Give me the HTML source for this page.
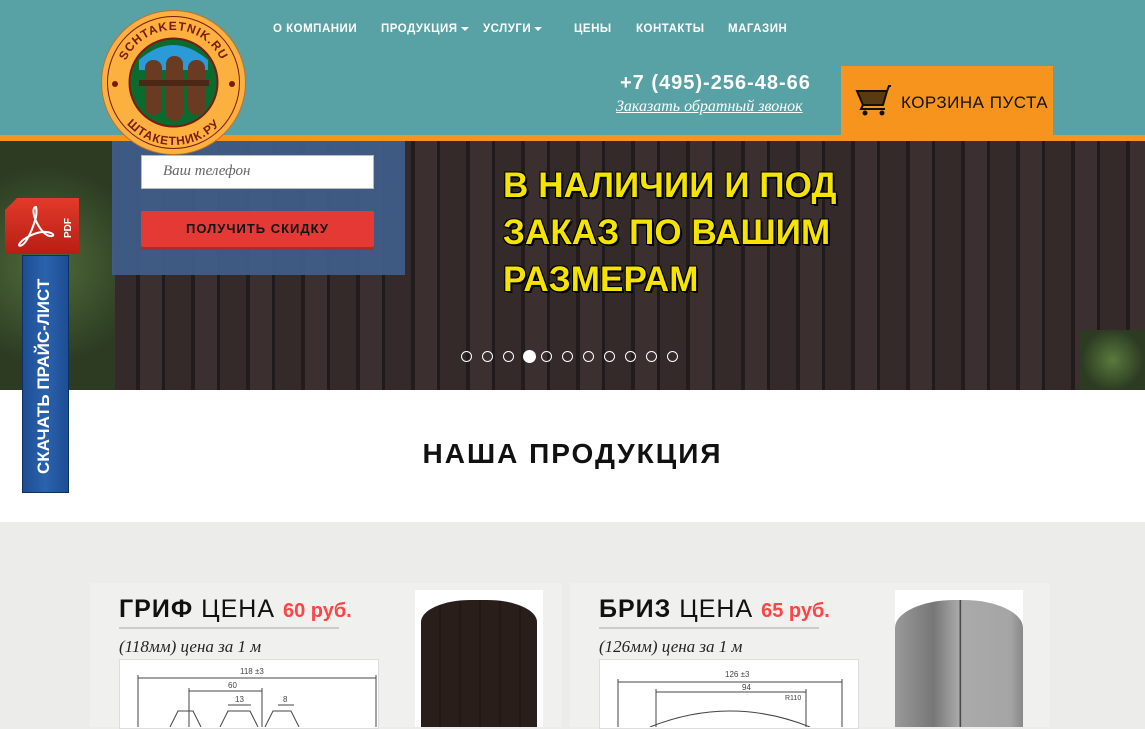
<!DOCTYPE html>
<html><head><meta charset="utf-8"><style>
*{margin:0;padding:0;box-sizing:border-box}
body{width:1145px;height:727px;overflow:hidden;position:relative;font-family:"Liberation Sans",sans-serif;background:#ecedeb}
.abs{position:absolute}
.hdr{left:0;top:0;width:1145px;height:135px;background:#58a2a6}
.ob{left:0;top:135px;width:1145px;height:6px;background:#f7941d}
.hero{left:0;top:141px;width:1145px;height:249px;background:repeating-linear-gradient(90deg,#342a2a 0 26px,#221c1d 26px 30px,#3b302f 30px 52px,#1f1a1b 52px 55px)}
.nav{top:23px;color:#fff;font-size:11.5px;font-weight:bold;letter-spacing:.5px}
.tri{display:inline-block;border-left:4px solid transparent;border-right:4px solid transparent;border-top:4px solid #fff;margin-left:3px;vertical-align:middle}
.big{font-family:"Liberation Sans",sans-serif;font-weight:bold;color:#f5e400;font-size:35px;line-height:47px;letter-spacing:.1px;text-shadow:2px 2px 0 #000,-1px -1px 0 #000,1px -1px 0 #000,-1px 1px 0 #000}
.dot{top:351px;width:11px;height:11px;border:1px solid #fff;border-radius:50%}
.serif{font-family:"Liberation Serif",serif;font-style:italic}
.ct{font-size:25px;color:#111;letter-spacing:1px}
</style></head><body>
<div class="abs hdr"></div>
<div class="abs ob"></div>
<div class="abs hero"></div>
<div class="abs" style="left:0;top:141px;width:115px;height:249px;background:radial-gradient(circle at 40% 50%,#4f6b3a,#2c3b22 70%)"></div>
<div class="abs" style="left:1080px;top:330px;width:65px;height:60px;background:radial-gradient(circle,#5a7a3e,#2c3b22 70%)"></div>
<div class="abs" style="left:112px;top:141px;width:293px;height:134px;background:#3f5d88;opacity:.95"></div>
<div class="abs" style="left:141px;top:155px;width:233px;height:34px;background:#fff;border:1px solid #bbb"></div>
<div class="abs serif" style="left:163px;top:163px;font-size:15px;color:#666">Ваш телефон</div>
<div class="abs" style="left:141px;top:211px;width:233px;height:36px;background:#e53935;border-radius:2px;box-shadow:0 3px 0 #b02a2a;color:#111;font-weight:bold;font-size:13px;letter-spacing:1px;text-align:center;line-height:36px">ПОЛУЧИТЬ СКИДКУ</div>
<!-- logo -->
<svg class="abs" style="left:101px;top:10px" width="145" height="145" viewBox="0 0 145 145">
<defs><path id="tp" d="M20 72.5 A52.5 52.5 0 0 1 125 72.5"/><path id="bp" d="M10 72.5 A62.5 62.5 0 0 0 135 72.5"/></defs>
<circle cx="72.5" cy="72.5" r="72" fill="#fbb040" stroke="#c0702a" stroke-width="1"/>
<circle cx="72.5" cy="72.5" r="66" fill="none" stroke="#7a1a10" stroke-width="1"/>
<circle cx="72.5" cy="72.5" r="44" fill="#0b6b2e" stroke="#7a1a10" stroke-width="2"/>
<path d="M38 50 Q72 20 107 50 L107 60 L38 60Z" fill="#2a9ad8"/>
<rect x="44" y="50" width="17" height="55" rx="8" fill="#6a3b22"/><rect x="65" y="46" width="17" height="65" rx="8" fill="#6a3b22"/><rect x="87" y="50" width="17" height="55" rx="8" fill="#6a3b22"/>
<rect x="38" y="70" width="70" height="6" fill="#4a2815"/>
<circle cx="14" cy="74" r="3" fill="#7a1a10"/><circle cx="131" cy="74" r="3" fill="#7a1a10"/>
<text font-size="12" font-weight="bold" fill="#7a1a10" font-family="Liberation Sans" letter-spacing="1"><textPath href="#tp" startOffset="50%" text-anchor="middle">SCHTAKETNIK.RU</textPath></text>
<text font-size="12" font-weight="bold" fill="#7a1a10" font-family="Liberation Sans" letter-spacing="1"><textPath href="#bp" startOffset="50%" text-anchor="middle">ШТАКЕТНИК.РУ</textPath></text>
</svg>
<div class="abs nav" style="left:273px">О КОМПАНИИ</div>
<div class="abs nav" style="left:381px">ПРОДУКЦИЯ<span class="tri"></span></div>
<div class="abs nav" style="left:483px">УСЛУГИ<span class="tri"></span></div>
<div class="abs nav" style="left:574px">ЦЕНЫ</div>
<div class="abs nav" style="left:636px">КОНТАКТЫ</div>
<div class="abs nav" style="left:728px">МАГАЗИН</div>
<div class="abs" style="left:620px;top:72px;color:#fff;font-size:20px;font-weight:bold;letter-spacing:1px">+7 (495)-256-48-66</div>
<div class="abs serif" style="left:616px;top:98px;color:#fff;font-size:16px;text-decoration:underline">Заказать обратный звонок</div>
<div class="abs" style="left:841px;top:66px;width:212px;height:69px;background:#f7941d"></div>
<svg class="abs" style="left:855px;top:85px" width="36" height="32" viewBox="0 0 36 32"><path d="M2 6h30l-4 14H8z" fill="#5a3a10" stroke="#111" stroke-width="2"/><path d="M32 6l2-5h2M8 20l-2 4h24" fill="none" stroke="#111" stroke-width="2"/><circle cx="10" cy="28" r="2.5" fill="#111"/><circle cx="27" cy="28" r="2.5" fill="#111"/></svg>
<div class="abs" style="left:901px;top:93px;font-size:17px;color:#111;letter-spacing:.5px">КОРЗИНА ПУСТА</div>
<div class="abs big" style="left:503px;top:162px">В НАЛИЧИИ И ПОД<br>ЗАКАЗ ПО ВАШИМ<br>РАЗМЕРАМ</div>
<div class="abs dot" style="left:461px"></div><div class="abs dot" style="left:482px"></div><div class="abs dot" style="left:503px"></div>
<div class="abs dot" style="left:523px;top:350px;width:13px;height:13px;background:#fff"></div>
<div class="abs dot" style="left:541px"></div><div class="abs dot" style="left:562px"></div><div class="abs dot" style="left:583px"></div><div class="abs dot" style="left:604px"></div><div class="abs dot" style="left:625px"></div><div class="abs dot" style="left:646px"></div><div class="abs dot" style="left:667px"></div>
<div class="abs" style="left:0;top:390px;width:1145px;height:132px;background:#fff"></div>
<div class="abs" style="left:0;top:438px;width:1145px;text-align:center;font-size:28px;font-weight:bold;letter-spacing:2px;color:#111">НАША ПРОДУКЦИЯ</div>
<!-- pdf tab -->
<div class="abs" style="left:22px;top:255px;width:47px;height:238px;background:linear-gradient(90deg,#1d4e94,#2b62ad,#1d4e94);border:1px solid #0e2f60"></div>
<div class="abs" style="left:46px;top:474px;transform:rotate(-90deg);transform-origin:0 0;color:#fff;font-weight:bold;font-size:17px;white-space:nowrap;margin-left:-12px">СКАЧАТЬ ПРАЙС-ЛИСТ</div>
<div class="abs" style="left:5px;top:198px;width:74px;height:56px;background:linear-gradient(#e23a2a,#b81e14);clip-path:polygon(12px 0,100% 0,100% 100%,0 100%,0 12px)"></div>
<svg class="abs" style="left:14px;top:203px" width="46" height="46" viewBox="0 0 46 46"><path d="M22 4c-4 0-3 8 1 16 4 8 10 14 15 13 4-1-2-5-10-4-8 1-18 6-22 11-3 4 2 4 6-2 4-6 8-16 10-24 1-6 0-10 0-10z" fill="none" stroke="#fff" stroke-width="2"/></svg>
<div class="abs" style="left:63px;top:238px;transform:rotate(-90deg);transform-origin:0 0;color:#fff;font-size:10px;font-weight:bold">PDF</div>
<!-- cards -->
<div class="abs" style="left:90px;top:583px;width:472px;height:144px;background:#f0f1ef"></div>
<div class="abs" style="left:570px;top:583px;width:480px;height:144px;background:#f0f1ef"></div>
<div class="abs ct" style="left:119px;top:595px"><b>ГРИФ</b> ЦЕНА <b style="color:#f44;font-size:20px;letter-spacing:0">60 руб.</b></div>
<div class="abs" style="left:119px;top:627px;width:220px;height:2px;background:#ccc"></div>
<div class="abs serif" style="left:119px;top:637px;font-size:17px;color:#222">(118мм) цена за 1 м</div>
<div class="abs" style="left:119px;top:659px;width:260px;height:70px;background:#fff;border:1px solid #ddd"></div>
<svg class="abs" style="left:120px;top:660px" width="258" height="67" viewBox="0 0 258 67" fill="none" stroke="#444" stroke-width="1"><path d="M18 18h238M18 15v52M256 15v52M69 31h73M69 28v39M142 28v39M108 45h23M158 45h16"/><path d="M50 67l8-16h15l8 16M100 67l8-16h22l8 16M145 67l8-16h18l8 16"/><text x="120" y="14" font-size="8" fill="#444" stroke="none" font-family="Liberation Sans">118 ±3</text><text x="108" y="28" font-size="8" fill="#444" stroke="none" font-family="Liberation Sans">60</text><text x="115" y="42" font-size="8" fill="#444" stroke="none" font-family="Liberation Sans">13</text><text x="163" y="42" font-size="8" fill="#444" stroke="none" font-family="Liberation Sans">8</text></svg>
<div class="abs" style="left:415px;top:590px;width:128px;height:137px;background:#fff"></div>
<div class="abs" style="left:421px;top:600px;width:116px;height:127px;background:repeating-linear-gradient(90deg,#2a1e1a 0 18px,#221814 18px 20px);border-radius:50px 50px 0 0/22px 22px 0 0"></div>
<div class="abs ct" style="left:599px;top:595px"><b>БРИЗ</b> ЦЕНА <b style="color:#f44;font-size:20px;letter-spacing:0">65 руб.</b></div>
<div class="abs" style="left:599px;top:627px;width:220px;height:2px;background:#ccc"></div>
<div class="abs serif" style="left:599px;top:637px;font-size:17px;color:#222">(126мм) цена за 1 м</div>
<div class="abs" style="left:599px;top:659px;width:260px;height:70px;background:#fff;border:1px solid #ddd"></div>
<svg class="abs" style="left:600px;top:660px" width="258" height="67" viewBox="0 0 258 67" fill="none" stroke="#444" stroke-width="1"><path d="M18 22h224M18 19v48M242 19v48M56 32h150M56 29v38M206 29v38"/><path d="M50 67Q130 35 210 67"/><text x="125" y="17" font-size="8" fill="#444" stroke="none" font-family="Liberation Sans">126 ±3</text><text x="142" y="30" font-size="8" fill="#444" stroke="none" font-family="Liberation Sans">94</text><text x="185" y="40" font-size="7" fill="#444" stroke="none" font-family="Liberation Sans">R110</text></svg>
<div class="abs" style="left:895px;top:590px;width:128px;height:137px;background:#fff"></div>
<div class="abs" style="left:895px;top:600px;width:128px;height:127px;background:linear-gradient(90deg,#999,#777 30%,#aaa 50%,#333 51%,#aaa 52%,#a5a5a5 90%,#888);border-radius:60px 60px 0 0/28px 28px 0 0"></div>
</body></html>
